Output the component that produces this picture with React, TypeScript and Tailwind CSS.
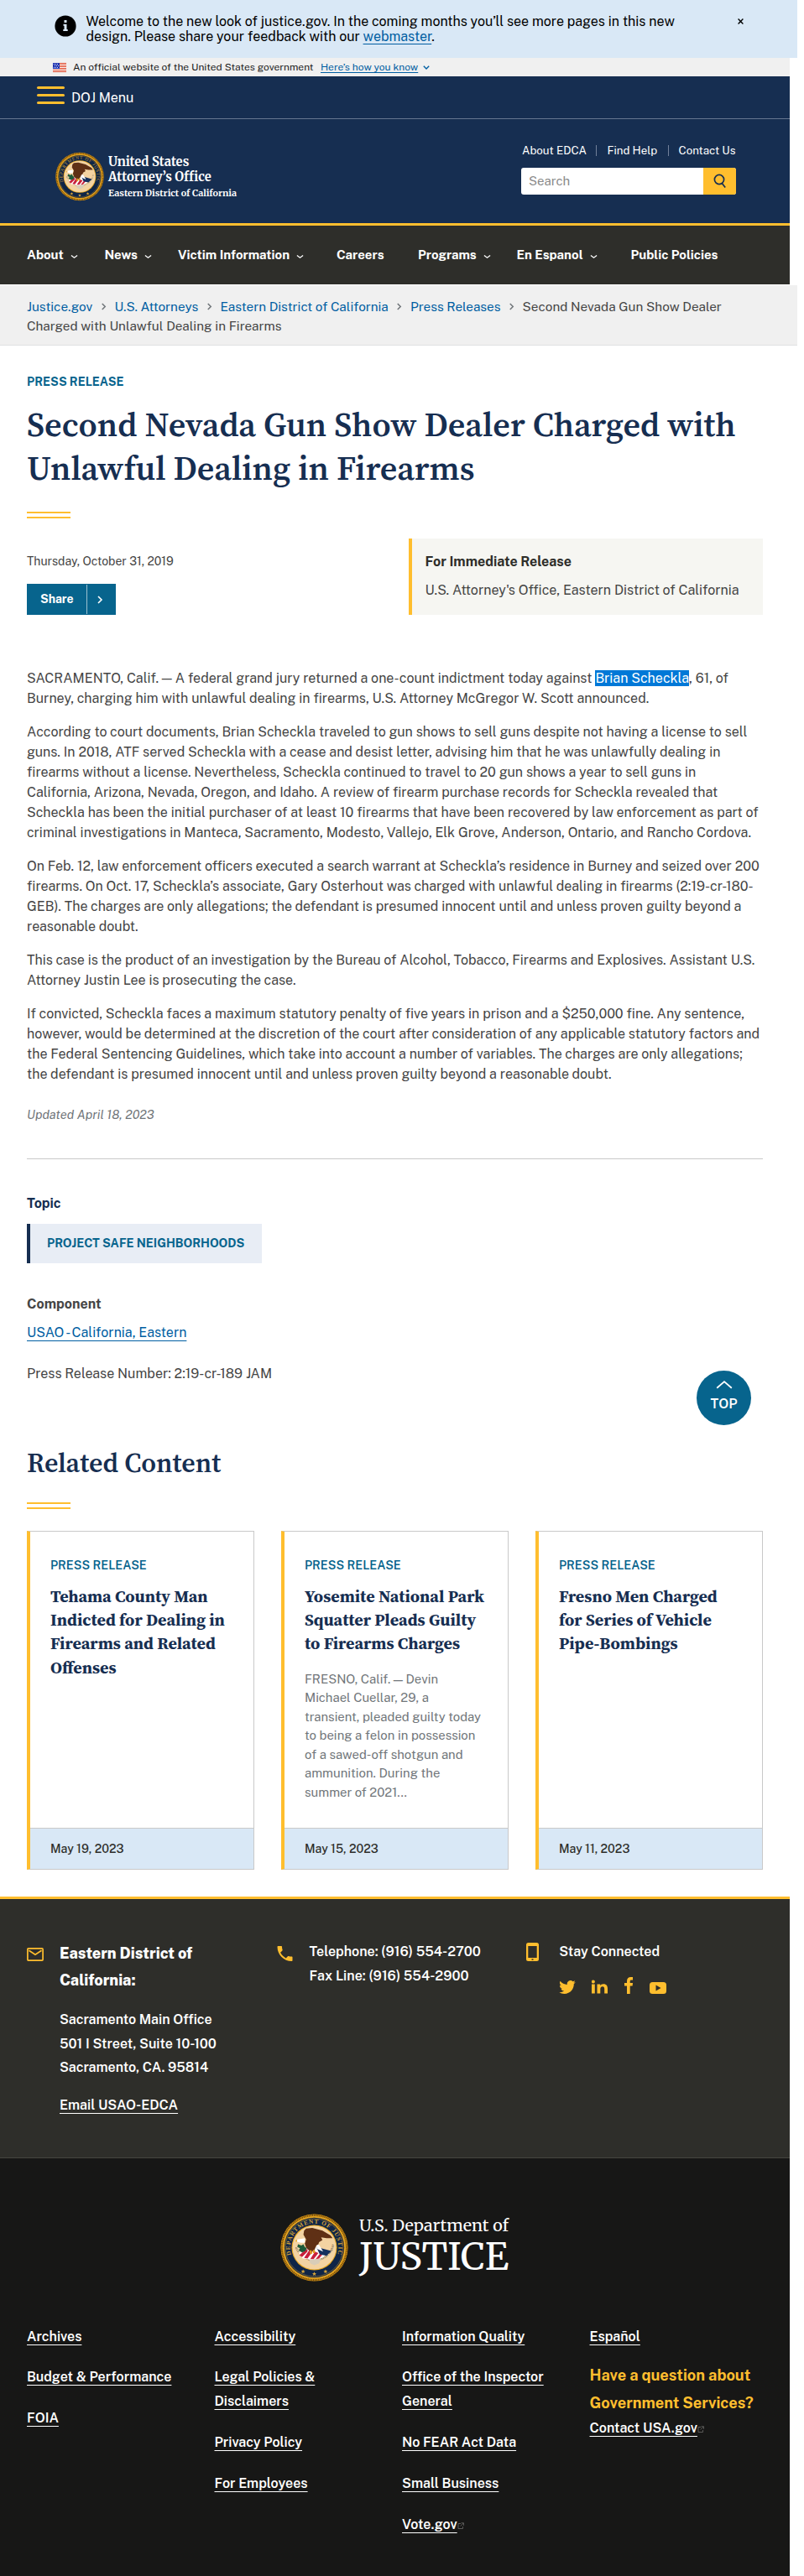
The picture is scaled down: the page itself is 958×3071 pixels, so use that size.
import React from "react";

function Chevron({ dir, className, w = 1.3 }: { dir: "down" | "right" | "up"; className: string; w?: number }) {
  const d = dir === "down" ? "M1 2.5 L5 7 L9 2.5" : dir === "right" ? "M2.5 1 L7.5 5 L2.5 9" : "M1 7.5 L5 3 L9 7.5";
  return (
    <svg viewBox="0 0 10 10" preserveAspectRatio="none" className={className} fill="none" stroke="currentColor">
      <path d={d} strokeWidth={w} vectorEffect="non-scaling-stroke" />
    </svg>
  );
}

function Lines({ items }: { items: string[] }) {
  return (
    <>
      {items.map((t) => (
        <span key={t} className="block whitespace-nowrap">{t}</span>
      ))}
    </>
  );
}

function Seal({ id, className }: { id: string; className: string }) {
  return (
    <svg viewBox="0 0 100 100" className={className}>
      <circle cx="50" cy="50" r="49.5" fill="#c98a14" />
      <circle cx="50" cy="50" r="47.6" fill="none" stroke="#5f3f0c" strokeWidth="2.4" strokeDasharray="1.1 1.5" />
      <circle cx="50" cy="50" r="45.2" fill="none" stroke="#f5b52a" strokeWidth="1.2" />
      <circle cx="50" cy="50" r="44" fill="#0f2547" />
      <circle cx="50" cy="50" r="42.6" fill="none" stroke="#b98a2a" strokeWidth="0.7" />
      <circle cx="50" cy="50" r="33.4" fill="#e9a923" />
      <circle cx="50" cy="50" r="32" fill="#f3d3a2" />
      <defs>
        <path id={id + "o"} d="M14.6 62 A37.4 37.4 0 1 1 85.4 62" />
        <path id={id + "i"} d="M21 46 A29.5 29.5 0 0 0 79 46" />
      </defs>
      <text fontFamily="Liberation Serif" fontSize="9" fill="#d3a23a" dy="2">
        <textPath href={"#" + id + "o"} startOffset="1" textLength="146">DEPARTMENT OF JUSTICE</textPath>
      </text>
      <text fontFamily="Liberation Serif" fontSize="4" fill="#4a4638">
        <textPath href={"#" + id + "i"} startOffset="4" textLength="84">QUI PRO DOMINA JUSTITIA SEQUITUR</textPath>
      </text>
      <g fill="#d3a23a">
        <path d="M50 85.5l.9 2.1 2.2.1-1.7 1.4.6 2.2-2-1.2-2 1.2.6-2.2-1.7-1.4 2.2-.1z" />
        <path d="M33.5 82l.9 2.1 2.2.1-1.7 1.4.6 2.2-2-1.2-2 1.2.6-2.2-1.7-1.4 2.2-.1z" />
        <path d="M66.5 82l.9 2.1 2.2.1-1.7 1.4.6 2.2-2-1.2-2 1.2.6-2.2-1.7-1.4 2.2-.1z" />
      </g>
      <path d="M42 66 L60 66 L57 73 L50 76 L44 73 Z" fill="#d9cdb8" />
      <path d="M27 58 L45 46 L72 57 L62 65 L46 68 L33 66 Z" fill="#fff" />
      <path d="M36 54l4 -2 0 4 -8 8 -4 -3zM43 53l5 2 -8 11 -5 -1zM51 56l5 2 -7 9 -5 0zM59 58l4 1 -6 7 -5 1z" fill="#c8203b" />
      <path d="M53 49 L60 51 L75 55 L68 62 L58 60 Z" fill="#14305e" />
      <path d="M52 45 L57 46 L63 56 L54 52 Z" fill="#fff" />
      <path d="M26 45l5 2 3 -2 2 4 3 2 -2 4 -5 2 -5 -3 2 -3 -4 -2z" fill="#1d5a3a" />
      <path d="M35 25 L38 22 L47 21 L62 25 L74 32 L77 36 L68 36 L60 35 L62 39 L57 42 L56 45 L53 47 L50 54 L46 56 L42 54 L38 50 L36 44 L38 38 L34 31 Z" fill="#5f3015" />
      <path d="M36 36 L31 37 L25 38 L24 41 L30 43 L36 43 Z" fill="#fff" />
      <path d="M25 38 L22 40 L24 42 Z" fill="#e9a923" />
      <path d="M43 54l3 0 1 5 -3 1zM48 53l3 1 0 4 -3 0z" fill="#e0a020" />
    </svg>
  );
}

function Flag() {
  return (
    <svg viewBox="0 0 16 11" className="h-[11px] w-4" shapeRendering="crispEdges">
      <rect width="16" height="11" fill="#fff" />
      {[0, 2, 4, 6, 8, 10].map((y) => <rect key={y} y={y} width="16" height="1" fill="#db3e1f" />)}
      <rect width="8" height="7" fill="#1e33b1" />
      {[1, 3, 5].map((y) => [1, 3, 5].map((x) => <rect key={x + "-" + y} x={x + (y === 3 ? 1 : 0)} y={y} width="1" height="1" fill="#dfe3f6" />))}
    </svg>
  );
}

const nav: [string, string, boolean][] = [
  ["About", "w-[92.5px]", true],
  ["News", "w-[87.5px]", true],
  ["Victim Information", "w-[189px]", true],
  ["Careers", "w-[97px]", false],
  ["Programs", "w-[117.5px]", true],
  ["En Espanol", "w-[136px]", true],
  ["Public Policies", "w-[110px]", false],
];

const crumbs = ["Justice.gov", "U.S. Attorneys", "Eastern District of California", "Press Releases"];

const paragraphs = [
  "According to court documents, Brian Scheckla traveled to gun shows to sell guns despite not having a license to sell guns. In 2018, ATF served Scheckla with a cease and desist letter, advising him that he was unlawfully dealing in firearms without a license. Nevertheless, Scheckla continued to travel to 20 gun shows a year to sell guns in California, Arizona, Nevada, Oregon, and Idaho. A review of firearm purchase records for Scheckla revealed that Scheckla has been the initial purchaser of at least 10 firearms that have been recovered by law enforcement as part of criminal investigations in Manteca, Sacramento, Modesto, Vallejo, Elk Grove, Anderson, Ontario, and Rancho Cordova.",
  "On Feb. 12, law enforcement officers executed a search warrant at Scheckla’s residence in Burney and seized over 200 firearms. On Oct. 17, Scheckla’s associate, Gary Osterhout was charged with unlawful dealing in firearms (2:19-cr-180-GEB). The charges are only allegations; the defendant is presumed innocent until and unless proven guilty beyond a reasonable doubt.",
  "This case is the product of an investigation by the Bureau of Alcohol, Tobacco, Firearms and Explosives. Assistant U.S. Attorney Justin Lee is prosecuting the case.",
  "If convicted, Scheckla faces a maximum statutory penalty of five years in prison and a $250,000 fine. Any sentence, however, would be determined at the discretion of the court after consideration of any applicable statutory factors and the Federal Sentencing Guidelines, which take into account a number of variables. The charges are only allegations; the defendant is presumed innocent until and unless proven guilty beyond a reasonable doubt.",
];

const cards: { title: string[]; text: string[]; date: string }[] = [
  {
    title: ["Tehama County Man", "Indicted for Dealing in", "Firearms and Related", "Offenses"],
    text: [],
    date: "May 19, 2023",
  },
  {
    title: ["Yosemite National Park", "Squatter Pleads Guilty", "to Firearms Charges"],
    text: [
      "FRESNO, Calif. — Devin",
      "Michael Cuellar, 29, a",
      "transient, pleaded guilty today",
      "to being a felon in possession",
      "of a sawed-off shotgun and",
      "ammunition. During the",
      "summer of 2021...",
    ],
    date: "May 15, 2023",
  },
  {
    title: ["Fresno Men Charged", "for Series of Vehicle", "Pipe-Bombings"],
    text: [],
    date: "May 11, 2023",
  },
];

const U = "underline decoration-1 underline-offset-[4px] [text-decoration-skip-ink:none]";

function FootLink({ lines, ext }: { lines: string[]; ext?: boolean }) {
  return (
    <div className="flex items-center">
      <a>
        {lines.map((t) => <span key={t} className={"block w-fit whitespace-nowrap " + U}>{t}</span>)}
      </a>
      {ext && (
        <svg viewBox="0 0 8 8" className="mt-[3px] h-2 w-2" fill="none" stroke="#5a5a58" strokeWidth="1">
          <path d="M4 1.5H1v6h5.5V5M4.5.8h3v3M7.3.8L3.8 4.5" />
        </svg>
      )}
    </div>
  );
}

function FootColumn({ children }: { children: React.ReactNode }) {
  return <div className="flex flex-col gap-5 [&>*:first-child]:-mb-px">{children}</div>;
}

function Rule() {
  return <div className="h-2 w-[52px] border-y-2 border-[#ffbe2e]" />;
}

const heading = "font-['Source_Serif_4','Liberation_Serif',serif]";
const logo = "font-['Merriweather','Liberation_Serif',serif]";

export default function App() {
  return (
    <div className="h-[3071px] w-[950px] overflow-hidden bg-white font-['Public_Sans','Inter',sans-serif] text-[16px] text-[#454545]">
      <div className="flex h-[69px] bg-[#d9e8f6] leading-[18px] text-black">
        <svg viewBox="0 0 26 26" className="mt-[18px] ml-[65px] h-[26px] w-[26px]">
          <circle cx="13" cy="13" r="12.6" fill="#000" />
          <path d="M11.5 6h3v3h-3zM10.5 10.8h4v6.2h1.2v2h-5.4v-2h1.2v-4.2h-1z" fill="#d9e8f6" />
        </svg>
        <p className="mt-[17px] ml-[11.5px] w-[776.5px] whitespace-nowrap">
          Welcome to the new look of justice.gov. In the coming months you’ll see more pages in this new<br />
          design. Please share your feedback with our <a className="text-[#005ea2] underline decoration-1 underline-offset-[3px]">webmaster</a>.
        </p>
        <svg viewBox="0 0 6 6" className="mt-[22px] h-[7px] w-[7px]" stroke="#000" strokeWidth="1.2"><path d="M.5.5l5 5M5.5.5l-5 5" /></svg>
      </div>

      <div className="flex h-[22px] w-[941px] items-center bg-[#f0f0f0] pl-[63px] text-[12px] text-[#1b1b1b]">
        <Flag />
        <span className="ml-[8px] whitespace-nowrap">An official website of the United States government</span>
        <a className="ml-[8.5px] whitespace-nowrap text-[#005ea2] underline decoration-1 underline-offset-[2px]">Here’s how you know</a>
        <Chevron dir="down" className="mt-[1px] ml-[6px] h-[7px] w-[8px] text-[#005ea2]" w={1.4} />
      </div>

      <header className="w-[941px] bg-[#162e51] text-white">
        <div className="flex h-[51px] items-start border-b border-[#65758f] pl-[44px]">
          <div className="mt-[12px] flex w-[33px] flex-col gap-[6px]">
            <i className="h-[3px] rounded bg-[#ffbe2e]" />
            <i className="h-[3px] rounded bg-[#ffbe2e]" />
            <i className="h-[3px] rounded bg-[#ffbe2e]" />
          </div>
          <span className="mt-[14px] ml-[8px] leading-6">DOJ Menu</span>
        </div>
        <div className="flex h-[124px] justify-between pr-[64px] pl-[66px]">
          <div className="flex pt-[39px]">
            <Seal id="a" className="h-[59px] w-[58px]" />
            <div className={"mt-[3px] ml-[5px] text-[14.8px] leading-[18.4px] font-bold whitespace-nowrap " + logo}>
              <div>United States</div>
              <div>Attorney’s Office</div>
              <div className="mt-[1px] text-[10.8px] leading-4">Eastern District of California</div>
            </div>
          </div>
          <div className="w-[256px] pt-[27px]">
            <div className="flex items-center text-[13.3px] leading-5 whitespace-nowrap">
              <span className="w-[89px] pl-px">About EDCA</span>
              <i className="h-[13px] w-px bg-[#71809a]" />
              <span className="ml-[12.5px] w-[72px]">Find Help</span>
              <i className="h-[13px] w-px bg-[#71809a]" />
              <span className="ml-[12px]">Contact Us</span>
            </div>
            <div className="mt-[11px] flex h-8 w-[256px] overflow-hidden rounded-[3px] bg-white">
              <span className="flex-1 pl-[9px] text-[15px] leading-8 text-[#8a8a8a]">Search</span>
              <span className="flex w-[39px] items-center justify-center bg-[#ffbe2e]">
                <svg viewBox="0 0 16 18" className="h-[18px] w-4" fill="none" stroke="#162e51" strokeWidth="1.7"><circle cx="7" cy="7" r="5.6" /><path d="M10.3 11.4L14.2 16.6" /></svg>
              </span>
            </div>
          </div>
        </div>
      </header>

      <nav className="flex h-[73px] w-[941px] items-center border-t-[3px] border-[#ffbe2e] bg-[#2e2e2a] pt-px pl-8 text-[15px] font-bold text-white">
        {nav.map(([t, w, ch]) => (
          <span key={t} className={"flex shrink-0 items-center whitespace-nowrap " + w}>
            {t}
            {ch && <Chevron dir="down" className="mt-[2px] ml-[8px] h-[6px] w-[9px]" />}
          </span>
        ))}
      </nav>

      <div className="mt-px h-[72px] border-b border-[#dfe1e2] bg-[#f0f0f0] pt-[14px] pl-8 text-[15.3px] leading-[23px] whitespace-nowrap">
        <div className="flex items-center">
          {crumbs.map((t) => (
            <span key={t} className="flex items-center">
              <a className="text-[#005ea2]">{t}</a>
              <Chevron dir="right" className="mx-[9.6px] h-[9px] w-[7px] text-[#71767a]" w={1.5} />
            </span>
          ))}
          <span>Second Nevada Gun Show Dealer</span>
        </div>
        <div>Charged with Unlawful Dealing in Firearms</div>
      </div>

      <main className="relative h-[1849px] w-[941px] pt-[33px] pr-8 pl-8">
        <div className="text-[14.1px] leading-5 font-bold text-[#07648d]">PRESS RELEASE</div>
        <h1 className={"mt-[15px] text-[40px] leading-[52px] font-semibold text-[#162e51] " + heading}>Second Nevada Gun Show Dealer Charged with Unlawful Dealing in Firearms</h1>
        <div className="mt-[26px]"><Rule /></div>
        <div className="mt-6 flex h-[91px] justify-between">
          <div className="pt-[17px]">
            <div className="text-[14px] leading-5">Thursday, October 31, 2019</div>
            <button className="mt-[17px] flex h-[37px] w-[106px] items-center bg-[#07648d] py-px text-[14px] font-bold text-white">
              <span className="w-[71px] pl-4 text-left">Share</span>
              <i className="h-full w-px bg-[#9cc1d1]" />
              <Chevron dir="right" className="ml-[11px] h-[10px] w-[8px]" w={1.6} />
            </button>
          </div>
          <div className="w-[422px] border-l-4 border-[#ffbe2e] bg-[#f6f6f2] pt-[18px] pl-[15.5px] whitespace-nowrap">
            <div className="leading-5 font-bold text-[#2e2e2a]">For Immediate Release</div>
            <div className="mt-[14px] leading-5">U.S. Attorney's Office, Eastern District of California</div>
          </div>
        </div>
        <div className="mt-[64px] w-[874px] space-y-4 leading-6">
          <p>
            SACRAMENTO, Calif. — A federal grand jury returned a one-count indictment today against <span className="bg-[#0078d7] text-white">Brian Scheckla</span>, 61, of Burney, charging him with unlawful dealing in firearms, U.S. Attorney McGregor W. Scott announced.
          </p>
          {paragraphs.map((p) => <p key={p}>{p}</p>)}
        </div>
        <div className="mt-[26px] text-[14.7px] leading-5 text-[#71767a] italic">Updated April 18, 2023</div>
        <hr className="mt-[42px] border-[#c9c9c9]" />
        <h3 className="mt-[43px] leading-5 font-bold text-[#162e51]">Topic</h3>
        <div className="mt-[14px] flex h-[47px] w-[280px] items-center border-l-4 border-[#162e51] bg-[#e8edf5] pt-px pl-5 text-[14.15px] font-bold whitespace-nowrap text-[#07648d]">PROJECT SAFE NEIGHBORHOODS</div>
        <h3 className="mt-[39px] leading-5 font-bold">Component</h3>
        <div className="mt-[14px] leading-5"><a className="text-[#005ea2] underline decoration-1 underline-offset-[4px] [text-decoration-skip-ink:none]">USAO - California, Eastern</a></div>
        <div className="mt-[29px] leading-5">Press Release Number: 2:19-cr-189 JAM</div>
        <h2 className={"mt-[76px] text-[32px] leading-10 font-semibold text-[#162e51] " + heading}>Related Content</h2>
        <div className="mt-[27px]"><Rule /></div>
        <div className="mt-[26px] grid h-[404px] grid-cols-3 gap-8">
          {cards.map((c) => (
            <article key={c.date} className="flex flex-col border border-l-4 border-[#c9c9c9] border-l-[#ffbe2e]">
              <div className="flex-1 pt-[30px] pl-6">
                <div className="text-[14.15px] leading-5 font-semibold text-[#07648d]">PRESS RELEASE</div>
                <h3 className={"mt-[13px] text-[20px] leading-[28.2px] font-bold text-[#162e51] " + heading}><Lines items={c.title} /></h3>
                <div className="mt-[17px] text-[14.9px] leading-[22.5px] text-[#71767a]"><Lines items={c.text} /></div>
              </div>
              <div className="flex h-[49px] items-center border-t border-[#c9c9c9] bg-[#d9e8f6] pt-px pl-6 text-[14.1px] font-medium text-[#2e2e2a]">{c.date}</div>
            </article>
          ))}
        </div>
        <a className="absolute top-[1222px] left-[830px] flex h-[65px] w-[65px] flex-col items-center rounded-full bg-[#07648d] pt-[8px] text-white">
          <Chevron dir="up" className="h-[17px] w-[22px]" w={1.8} />
          <span className="mt-[5px] text-[16px] leading-5 font-semibold">TOP</span>
        </a>
      </main>

      <footer className="w-[941px] font-semibold text-white">
        <div className="flex h-[312px] border-t-[3px] border-b border-t-[#ffbe2e] border-b-[#454540] bg-[#2e2e2a] pl-8 leading-[28.7px] whitespace-nowrap">
          <div className="flex w-[297.6px]">
            <svg viewBox="0 0 20 16" className="mt-[58px] mr-[19px] h-4 w-5" fill="none" stroke="#ffbe2e" strokeWidth="1.7"><rect x=".9" y=".9" width="18.2" height="14.2" rx="1" /><path d="M2.5 3.2L10 8.3l7.5-5.1" /></svg>
            <div className="pt-[49px]">
              <div className="text-[18px] leading-[31.5px] font-extrabold"><Lines items={["Eastern District of", "California:"]} /></div>
              <div className="mt-[18px] tracking-[-0.02px]"><Lines items={["Sacramento Main Office", "501 I Street, Suite 10-100", "Sacramento, CA. 95814"]} /></div>
              <div className="mt-4"><a className="underline decoration-1 underline-offset-[4px] [text-decoration-skip-ink:none]">Email USAO-EDCA</a></div>
            </div>
          </div>
          <div className="flex w-[297.6px]">
            <svg viewBox="3 3 18 18" className="mt-[56px] mr-[20px] h-[18px] w-[19px]" fill="#ffbe2e"><path d="M6.6 10.8c1.4 2.8 3.8 5.1 6.6 6.6l2.2-2.2c.3-.3.7-.4 1-.2 1.1.4 2.3.6 3.6.6.6 0 1 .4 1 1V20c0 .6-.4 1-1 1C10.6 21 3 13.4 3 4c0-.6.5-1 1-1h3.5c.6 0 1 .4 1 1 0 1.2.2 2.5.6 3.6.1.3 0 .7-.2 1z" /></svg>
            <div className="pt-[49px]"><Lines items={["Telephone: (916) 554-2700", "Fax Line: (916) 554-2900"]} /></div>
          </div>
          <div className="flex">
            <svg viewBox="0 0 15 22" className="mt-[52px] mr-[24px] h-[22px] w-[15px]"><path fillRule="evenodd" fill="#ffbe2e" d="M2.5 0h10A2.5 2.5 0 0 1 15 2.5v17a2.5 2.5 0 0 1-2.5 2.5h-10A2.5 2.5 0 0 1 0 19.5v-17A2.5 2.5 0 0 1 2.5 0zM2.3 4v14h10.4V4zM6.5 19.3h2v1.5h-2z" /></svg>
            <div className="pt-[49px]">
              <div>Stay Connected</div>
              <div className="mt-[15px] flex h-5 items-end">
                <svg viewBox="0 2.2 24 19.6" className="h-4 w-5" fill="#ffbe2e"><path d="M23.95 4.57a10 10 0 0 1-2.82.78 4.96 4.96 0 0 0 2.16-2.73c-.95.56-2 .96-3.13 1.18a4.92 4.92 0 0 0-8.38 4.48C7.69 8.1 4.07 6.13 1.64 3.16a4.82 4.82 0 0 0-.67 2.48c0 1.71.87 3.21 2.19 4.1a4.9 4.9 0 0 1-2.23-.62v.06a4.92 4.92 0 0 0 3.95 4.83 5 5 0 0 1-2.21.08 4.94 4.94 0 0 0 4.6 3.42A9.87 9.87 0 0 1 0 19.54a14 14 0 0 0 7.55 2.21c9.05 0 14-7.5 14-13.98 0-.21 0-.42-.02-.63a9.94 9.94 0 0 0 2.46-2.55z" /></svg>
                <svg viewBox="0 0 19 16" className="ml-[19px] h-[17px] w-[19px]" fill="#ffbe2e"><path d="M0 5h3.8v11H0zM1.9 0a2 2 0 0 1 0 4 2 2 0 0 1 0-4zM6.5 5h3.7v1.6C10.8 5.5 12 4.7 14 4.7c3.8 0 5 2.2 5 5.8V16h-3.8v-5c0-1.7-.3-3.2-2.2-3.2-2 0-2.7 1.4-2.7 3.2v5H6.5z" /></svg>
                <svg viewBox="0 0 10 20" className="ml-[20px] h-5 w-[10px]" fill="#ffbe2e"><path d="M3 20v-9.5H0V7h3V4.8C3 1.6 4.7 0 7.5 0H10v3.4H8.3C7 3.4 6.7 4 6.7 5V7H10l-.4 3.5H6.7V20z" /></svg>
                <svg viewBox="0 0 20 14" className="ml-[20px] h-[14px] w-5"><rect width="20" height="14" rx="3.5" fill="#ffbe2e" /><path d="M7.5 3.5l6 3.5-6 3.5z" fill="#2e2e2a" /></svg>
              </div>
            </div>
          </div>
        </div>

        <div className="h-[498px] bg-[#171716] pt-[66px] pl-8">
          <div className="flex h-[81px] pl-[302px]">
            <Seal id="b" className="h-[81px] w-[81px]" />
            <div className={"mt-[2px] ml-[13px] w-[190px] font-normal whitespace-nowrap " + logo}>
              <div className="text-[19.7px] leading-6">U.S. Department of</div>
              <div className="text-[44.4px] leading-[50px]">JUSTICE</div>
            </div>
          </div>
          <div className="mt-[51px] grid grid-cols-[223.5px_223.5px_223.5px_1fr] leading-[29px]">
            <FootColumn>
              <FootLink lines={["Archives"]} />
              <FootLink lines={["Budget & Performance"]} />
              <FootLink lines={["FOIA"]} />
            </FootColumn>
            <FootColumn>
              <FootLink lines={["Accessibility"]} />
              <FootLink lines={["Legal Policies &", "Disclaimers"]} />
              <FootLink lines={["Privacy Policy"]} />
              <FootLink lines={["For Employees"]} />
            </FootColumn>
            <FootColumn>
              <FootLink lines={["Information Quality"]} />
              <FootLink lines={["Office of the Inspector", "General"]} />
              <FootLink lines={["No FEAR Act Data"]} />
              <FootLink lines={["Small Business"]} />
              <FootLink ext lines={["Vote.gov"]} />
            </FootColumn>
            <div>
              <FootLink lines={["Español"]} />
              <div className="mt-[15px] text-[18.2px] leading-[33px] font-bold whitespace-nowrap text-[#ffbe2e]"><Lines items={["Have a question about", "Government Services?"]} /></div>
              <div className="-mt-px"><FootLink ext lines={["Contact USA.gov"]} /></div>
            </div>
          </div>
        </div>
      </footer>
    </div>
  );
}
